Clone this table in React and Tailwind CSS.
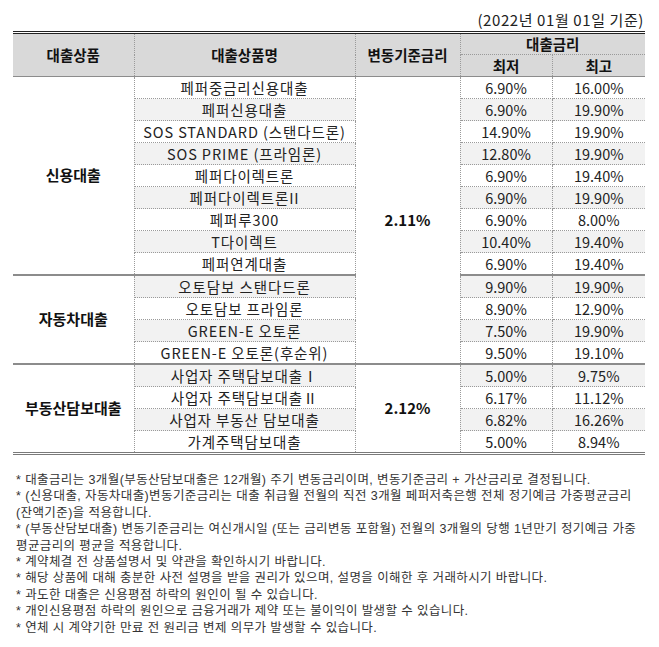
import React from "react";

const loanGroups = [
  {
    label: "신용대출",
    rows: [
      { name: "페퍼중금리신용대출", min: "6.90%", max: "16.00%" },
      { name: "페퍼신용대출", min: "6.90%", max: "19.90%" },
      { name: "SOS STANDARD (스탠다드론)", min: "14.90%", max: "19.90%" },
      { name: "SOS PRIME (프라임론)", min: "12.80%", max: "19.90%" },
      { name: "페퍼다이렉트론", min: "6.90%", max: "19.40%" },
      { name: "페퍼다이렉트론II", min: "6.90%", max: "19.90%" },
      { name: "페퍼루300", min: "6.90%", max: "8.00%" },
      { name: "T다이렉트", min: "10.40%", max: "19.40%" },
      { name: "페퍼연계대출", min: "6.90%", max: "19.40%" },
    ],
  },
  {
    label: "자동차대출",
    rows: [
      { name: "오토담보 스탠다드론", min: "9.90%", max: "19.90%" },
      { name: "오토담보 프라임론", min: "8.90%", max: "12.90%" },
      { name: "GREEN-E 오토론", min: "7.50%", max: "19.90%" },
      { name: "GREEN-E 오토론(후순위)", min: "9.50%", max: "19.10%" },
    ],
  },
  {
    label: "부동산담보대출",
    rows: [
      { name: "사업자 주택담보대출Ⅰ", min: "5.00%", max: "9.75%" },
      { name: "사업자 주택담보대출Ⅱ", min: "6.17%", max: "11.12%" },
      { name: "사업자 부동산 담보대출", min: "6.82%", max: "16.26%" },
      { name: "가계주택담보대출", min: "5.00%", max: "8.94%" },
    ],
  },
];

// base rate cells: which group they start at, and how many rows they cover
const baseRates = [
  { group: 0, rate: "2.11%", span: 13 },
  { group: 2, rate: "2.12%", span: 4 },
];

const notes = [
  "* 대출금리는 3개월(부동산담보대출은 12개월) 주기 변동금리이며, 변동기준금리 + 가산금리로 결정됩니다.",
  "* (신용대출, 자동차대출)변동기준금리는 대출 취급월 전월의 직전 3개월 페퍼저축은행 전체 정기예금 가중평균금리",
  "(잔액기준)을 적용합니다.",
  "* (부동산담보대출) 변동기준금리는 여신개시일 (또는 금리변동 포함월) 전월의 3개월의 당행 1년만기 정기예금 가중",
  "평균금리의 평균을 적용합니다.",
  "* 계약체결 전 상품설명서 및 약관을 확인하시기 바랍니다.",
  "* 해당 상품에 대해 충분한 사전 설명을 받을 권리가 있으며, 설명을 이해한 후 거래하시기 바랍니다.",
  "* 과도한 대출은 신용평점 하락의 원인이 될 수 있습니다.",
  "* 개인신용평점 하락의 원인으로 금융거래가 제약 또는 불이익이 발생할 수 있습니다.",
  "* 연체 시 계약기한 만료 전 원리금 변제 의무가 발생할 수 있습니다.",
];

const dotR = "[border-right:1px_dotted_#9a9a9a]";
const dotB = "[border-bottom:1px_dotted_#9a9a9a]";
const groupB = "[border-bottom:2px_solid_#8c8c8c]";
const endB = "[border-bottom:3px_double_#7a7a7a]";

const App = () => {
  let rowIndex = 0;

  return (
    <div className="w-[659px] min-h-[647px] bg-white pt-[9px] font-['Noto_Sans_CJK_KR',sans-serif] text-[#222]">
      {/* Reference date */}
      <div className="h-[22px] pr-[15px] text-right text-[15px] tracking-[0.6px] leading-[22px]">
        (2022년 01월 01일 기준)
      </div>

      {/* Rate table */}
      <table className="ml-[13px] w-[632px] table-fixed border-collapse text-[14.5px]">
        <colgroup>
          <col className="w-[121px]" />
          <col className="w-[221px]" />
          <col className="w-[105px]" />
          <col className="w-[92px]" />
          <col className="w-[93px]" />
        </colgroup>
        <thead>
          <tr className="h-[22px] bg-[#d9d9d9]">
            <th rowSpan={2} className={`p-0 font-bold text-[#111] [border-top:3px_double_#222] [border-bottom:1px_solid_#8c8c8c] ${dotR}`}>
              대출상품
            </th>
            <th rowSpan={2} className={`p-0 font-bold text-[#111] [border-top:3px_double_#222] [border-bottom:1px_solid_#8c8c8c] ${dotR}`}>
              대출상품명
            </th>
            <th rowSpan={2} className={`p-0 font-bold text-[#111] [border-top:3px_double_#222] [border-bottom:1px_solid_#8c8c8c] ${dotR}`}>
              변동기준금리
            </th>
            <th colSpan={2} className={`p-0 font-bold leading-[20px] text-[#111] [border-top:3px_double_#222] ${dotB}`}>
              대출금리
            </th>
          </tr>
          <tr className="h-[22px] bg-[#d9d9d9]">
            <th className={`p-0 font-bold leading-[20px] text-[#111] [border-bottom:1px_solid_#8c8c8c] ${dotR}`}>최저</th>
            <th className="p-0 font-bold leading-[20px] text-[#111] [border-bottom:1px_solid_#8c8c8c]">최고</th>
          </tr>
        </thead>
        <tbody>
          {loanGroups.map((group, g) =>
            group.rows.map((row, r) => {
              const i = rowIndex++;
              const isLastInGroup = r === group.rows.length - 1;
              const isLastGroup = g === loanGroups.length - 1;
              const bottom = isLastInGroup ? (isLastGroup ? endB : groupB) : dotB;
              const shade = i % 2 === 1 ? "bg-[#f2f2f2]" : "bg-white";
              const base = r === 0 ? baseRates.find((b) => b.group === g) : null;
              const baseBottom = base && base.group === 0 ? groupB : endB;

              return (
                <tr key={row.name} className="h-[22px]">
                  {r === 0 && (
                    <td
                      rowSpan={group.rows.length}
                      className={`p-0 text-center text-[15px] font-bold text-[#111] bg-white ${dotR} ${isLastGroup ? endB : groupB}`}
                    >
                      {group.label}
                    </td>
                  )}
                  <td className={`p-0 text-center leading-[21px] tracking-[0.9px] whitespace-nowrap ${shade} ${dotR} ${bottom}`}>
                    {row.name}
                  </td>
                  {base && (
                    <td
                      rowSpan={base.span}
                      className={`p-0 text-center text-[15px] font-bold text-[#111] bg-white ${dotR} ${baseBottom}`}
                    >
                      {base.rate}
                    </td>
                  )}
                  <td className={`p-0 text-center leading-[21px] ${shade} ${dotR} ${bottom}`}>{row.min}</td>
                  <td className={`p-0 text-center leading-[21px] ${shade} ${bottom}`}>{row.max}</td>
                </tr>
              );
            })
          )}
        </tbody>
      </table>

      {/* Notes */}
      <div className="mt-[17px] pl-[16px] font-['Liberation_Sans','Noto_Sans_CJK_KR',sans-serif] text-[12.5px] tracking-[0.4px] leading-[16.4px] text-[#333]">
        {notes.map((line) => (
          <div key={line} className="whitespace-nowrap">
            {line}
          </div>
        ))}
      </div>
    </div>
  );
};

export default App;
